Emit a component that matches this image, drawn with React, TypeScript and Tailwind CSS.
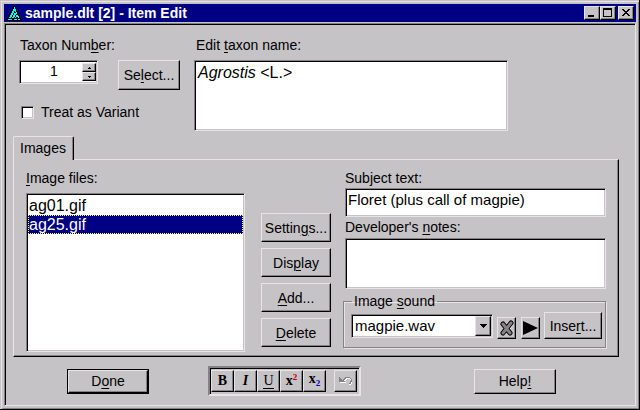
import type { ReactNode } from "react";

const raised =
  "border border-t-[#e7e3e7] border-l-[#e7e3e7] border-r-black border-b-black bg-[#c6c3c6] shadow-[inset_-1px_-1px_#848284]";
const sunken =
  "border border-t-[#848284] border-l-[#848284] border-r-[#e7e3e7] border-b-[#e7e3e7] bg-white shadow-[inset_1px_1px_#000,inset_-1px_-1px_#c6c3c6]";

function Key({ children }: { children: ReactNode }) {
  return <span className="underline decoration-1 underline-offset-2">{children}</span>;
}

function PushButton({ className = "", children }: { className?: string; children: ReactNode }) {
  return (
    <button type="button" className={`${raised} flex items-center justify-center whitespace-nowrap ${className}`}>
      {children}
    </button>
  );
}

function CaptionButton({ label, children }: { label: string; children: ReactNode }) {
  return (
    <button type="button" aria-label={label} className={`${raised} h-[14px] w-4`}>
      <svg width="14" height="12" viewBox="0 0 14 12" shapeRendering="crispEdges" className="block">
        {children}
      </svg>
    </button>
  );
}

function ToolButton({ label, className = "", children }: { label: string; className?: string; children: ReactNode }) {
  return (
    <button
      type="button"
      aria-label={label}
      className={`${raised} flex h-[22px] w-[23px] items-center justify-center font-['Liberation_Serif',serif] leading-4 ${className}`}
    >
      {children}
    </button>
  );
}

function TitleBar() {
  return (
    <header className="flex h-[18px] shrink-0 items-center bg-[#000084] px-0.5 text-white">
      <svg width="16" height="16" viewBox="0 0 16 16" shapeRendering="crispEdges" aria-hidden="true">
        <path d="M7 1h3v2h1v3h1v2h1v2h1v2h1v2h1v2H0v-2h1v-2h1v-2h1V9h1V7h1V5h1V3h1z" fill="#000" />
        <path
          d="M8 2h1v2H8zM7 4h2v2H7zM6 6h2v2H6zM5 8h2v2H5zM4 10h2v2H4zM3 12h2v1H3zM2 14h4v1H2zM9 4h1v3H9zM8 8h2v2H8zM7 10h2v2H7zM6 12h2v1H6zM10 7h1v2h-1zM10 10h2v2h-2zM9 12h1v1H9zM12 11h1v2h-1zM8 14h3v1H8zM12 14h2v1h-2z"
          fill="#00ffff"
        />
      </svg>
      <h1 className="ml-[3px] flex-1 text-sm leading-4 font-bold">sample.dlt [2] - Item Edit</h1>
      <div className="flex">
        <CaptionButton label="Minimize">
          <path d="M3 8h6v2H3z" />
        </CaptionButton>
        <CaptionButton label="Maximize">
          <path d="M2 1h9v9H2zM3 3v6h7V3z" fillRule="evenodd" />
        </CaptionButton>
        <div className="ml-0.5 flex">
          <CaptionButton label="Close">
            <path d="M3 2h2v1h1v1h2V3h1V2h2v1h-1v1H9v1H8v1h1v1h1v1h1v1H9V8H8V7H6v1H5v1H3V8h1V7h1V6h1V5H5V4H4V3H3z" />
          </CaptionButton>
        </div>
      </div>
    </header>
  );
}

function ItemSection() {
  return (
    <section className="flex px-[13px] pt-3">
      <div className="w-[175px] shrink-0">
        <label htmlFor="number" className="ml-px block">
          Taxon Num<Key>b</Key>er:
        </label>
        <div className="mt-[7px] flex items-start justify-between pr-[14px]">
          <div className={`${sunken} flex h-6 w-[79px] p-0.5 pr-px`}>
            <input
              id="number"
              defaultValue="1"
              className="w-0 min-w-0 flex-1 bg-transparent pb-0.5 pl-1 text-center outline-none"
            />
            <div className="flex w-[14px] flex-col">
              {["Increase", "Decrease"].map((name, i) => (
                <button
                  key={name}
                  type="button"
                  aria-label={name}
                  className={`${raised} flex flex-1 items-center justify-center`}
                >
                  <svg width="3" height="2" viewBox="0 0 3 2" shapeRendering="crispEdges">
                    <path d={i === 0 ? "M1 0h1v1h1v1H0V1h1z" : "M0 0h3v1H2v1H1V1H0z"} />
                  </svg>
                </button>
              ))}
            </div>
          </div>
          <PushButton className="h-[30px] w-[62px]">
            <span>
              Se<Key>l</Key>ect...
            </span>
          </PushButton>
        </div>
        <label className="mt-[14px] ml-0.5 flex items-center gap-[7px]">
          <input type="checkbox" className={`${sunken} size-[13px] appearance-none`} />
          Treat as Variant
        </label>
      </div>
      <div className="w-[52%]">
        <div id="taxon-label" className="ml-0.5">
          Edit <Key>t</Key>axon name:
        </div>
        <div
          role="textbox"
          aria-labelledby="taxon-label"
          aria-multiline="true"
          contentEditable
          suppressContentEditableWarning
          className={`${sunken} mt-[7px] h-[71px] px-[3px] py-1 text-base leading-4 outline-none`}
        >
          <i>Agrostis</i> &lt;L.&gt;
        </div>
      </div>
    </section>
  );
}

function ImageSound() {
  return (
    <fieldset className="mt-1 h-[55px] border border-[#848284] pr-[3px] pl-[7px] shadow-[1px_1px_#e7e3e7,inset_1px_1px_#e7e3e7]">
      <legend className="ml-px px-0.5">
        Image <Key>s</Key>ound
      </legend>
      <div className="mt-[3px] flex items-center">
        <div className={`${sunken} relative h-6 min-w-0 flex-1`}>
          <select
            aria-label="Image sound"
            className="h-full w-full appearance-none bg-transparent pl-[3px] text-[15px] outline-none"
          >
            <option>magpie.wav</option>
          </select>
          <span
            className={`${raised} pointer-events-none absolute top-px right-px bottom-px flex w-4 items-center justify-center`}
          >
            <svg width="7" height="4" viewBox="0 0 7 4" shapeRendering="crispEdges">
              <path d="M0 0h7v1H6v1H5v1H4v1H3V3H2V2H1V1H0z" />
            </svg>
          </span>
        </div>
        <PushButton className="mt-1 ml-1 h-[22px] w-[19px] shrink-0">
          <svg width="15" height="16" viewBox="0 0 15 16" role="img" aria-label="Remove sound">
            <path d="M3 5l4 4-4 5M5 15l4-4 4 4M14 4l-3 5" stroke="#fff" fill="none" />
            <path d="M4 4l7 9M12 3L4 13" stroke="#000" strokeWidth="5" strokeLinecap="round" />
            <path d="M4 4l7 9M12 3L4 13" stroke="#848284" strokeWidth="3" strokeLinecap="round" />
          </svg>
        </PushButton>
        <PushButton className="mt-1 ml-[5px] h-[22px] w-[19px] shrink-0">
          <svg width="15" height="14" viewBox="0 0 15 14" role="img" aria-label="Play sound">
            <path d="M0 0l15 7-15 7z" />
          </svg>
        </PushButton>
        <PushButton className="ml-1 h-[27px] w-[58px] shrink-0">
          <span>
            Inse<Key>r</Key>t...
          </span>
        </PushButton>
      </div>
    </fieldset>
  );
}

function ImagesTab() {
  return (
    <section className="mt-[5px] mr-4 ml-[7px]">
      <div role="tablist" className="flex">
        <button
          type="button"
          role="tab"
          aria-selected="true"
          className="relative z-10 -mb-px h-6 w-[61px] rounded-t-xs border-t border-r border-l border-t-[#e7e3e7] border-r-black border-l-[#e7e3e7] bg-[#c6c3c6] pr-px pb-0.5 shadow-[inset_-1px_0_#848284]"
        >
          Images
        </button>
      </div>
      <div
        role="tabpanel"
        className="flex border border-t-[#e7e3e7] border-r-black border-b-black border-l-[#e7e3e7] pt-[10px] pr-3 pb-1 pl-3 shadow-[inset_-1px_-1px_#848284]"
      >
        <div className="w-[219px] shrink-0">
          <label htmlFor="files" className="block">
            <Key>I</Key>mage files:
          </label>
          <select
            id="files"
            size={2}
            defaultValue="ag25.gif"
            className={`${sunken} mt-[7px] block h-[159px] w-full overflow-hidden px-px py-0.5 text-base outline-none`}
          >
            {["ag01.gif", "ag25.gif"].map((file) => (
              <option
                key={file}
                className="h-[19px] min-h-0 border border-transparent p-0 leading-4 checked:border-dotted checked:border-[#ffff7b] checked:bg-[#000084] checked:bg-[linear-gradient(#000084,#000084)] checked:text-white!"
              >
                {file}
              </option>
            ))}
          </select>
        </div>
        <div className="mt-[43px] ml-4 flex w-[70px] shrink-0 flex-col gap-[6px]">
          <PushButton className="h-[29px]">
            <span>
              Settin<Key>g</Key>s...
            </span>
          </PushButton>
          <PushButton className="h-[29px]">
            <span>
              Dis<Key>p</Key>lay
            </span>
          </PushButton>
          <PushButton className="h-[29px]">
            <span>
              <Key>A</Key>dd...
            </span>
          </PushButton>
          <PushButton className="h-[29px]">
            <span>
              <Key>D</Key>elete
            </span>
          </PushButton>
        </div>
        <div className="ml-3 min-w-0 flex-1">
          <div className="pl-0.5">
            <label htmlFor="subject" className="block">
              Sub<Key>j</Key>ect text:
            </label>
            <input
              id="subject"
              defaultValue="Floret (plus call of magpie)"
              className={`${sunken} mt-0.5 block h-[29px] w-full px-[2px] pb-[6px] text-[15px] outline-none`}
            />
            <label htmlFor="notes" className="mt-0.5 block">
              Developer's <Key>n</Key>otes:
            </label>
            <textarea id="notes" className={`${sunken} mt-[3px] block h-[51px] w-full resize-none p-1 outline-none`} />
          </div>
          <ImageSound />
        </div>
      </div>
    </section>
  );
}

function Footer() {
  return (
    <footer className="flex items-center pt-[9px] pr-[79px] pb-2 pl-[61px]">
      <div className="border border-black">
        <PushButton className="h-[23px] w-20">
          <span>
            D<Key>o</Key>ne
          </span>
        </PushButton>
      </div>
      <div
        role="toolbar"
        aria-label="Text format"
        className="ml-[59px] flex border-2 border-t-[#848284] border-r-[#e7e3e7] border-b-[#e7e3e7] border-l-[#848284] p-0.5 pl-px shadow-[inset_1px_1px_#000]"
      >
        <ToolButton label="Bold" className="text-sm font-bold">
          B
        </ToolButton>
        <ToolButton label="Italic" className="text-sm font-bold italic">
          I
        </ToolButton>
        <ToolButton label="Underline" className="text-sm">
          <span className="border-b border-black leading-[14px]">U</span>
        </ToolButton>
        <ToolButton label="Superscript" className="text-sm font-bold">
          <span>x</span>
          <span className="pb-2 text-[9px] text-[#c00000]">2</span>
        </ToolButton>
        <ToolButton label="Subscript" className="text-sm font-bold">
          <span className="pb-1">x</span>
          <span className="pt-1 text-[9px] text-[#0000c6]">2</span>
        </ToolButton>
        <ToolButton label="Undo" className="ml-2">
          <svg width="14" height="10" viewBox="0 0 14 10" fill="none" shapeRendering="crispEdges">
            <path d="M5 4h1V3h1V2h4v1h1v1h1v4h-1v1h-2V8h1V7h1V4h-1V3H8v1H7v1H6v1h1v1H1V2h1v1h1v1h2z" fill="#fff" />
            <path d="M4 3h1V2h1V1h5v1h1v1h1v3h-1v2h-2V7h1V5h1V3h-1V2H7v1H6v1H5v1h1v1H0V1h1v1h1v1h1v1h1z" fill="#848284" />
          </svg>
        </ToolButton>
      </div>
      <PushButton className="ml-auto h-[25px] w-[82px]">
        <span>
          Help<Key>!</Key>
        </span>
      </PushButton>
    </footer>
  );
}

export default function App() {
  return (
    <div className="flex min-h-screen flex-col border-r border-b border-black bg-[#c6c3c6] font-['Liberation_Sans',Arial,sans-serif] text-sm leading-4 text-black">
      <div className="flex flex-1 flex-col pt-1 pr-[3px] pb-[3px] pl-1 shadow-[inset_1px_1px_#c6c3c6,inset_2px_2px_#e7e3e7,inset_-1px_-1px_#848284]">
        <TitleBar />
        <main className="mt-px flex-1 border border-t-[#848284] border-r-[#e7e3e7] border-b-[#e7e3e7] border-l-[#848284] pt-px pl-px shadow-[inset_1px_1px_#000]">
          <ItemSection />
          <ImagesTab />
          <Footer />
        </main>
      </div>
    </div>
  );
}
